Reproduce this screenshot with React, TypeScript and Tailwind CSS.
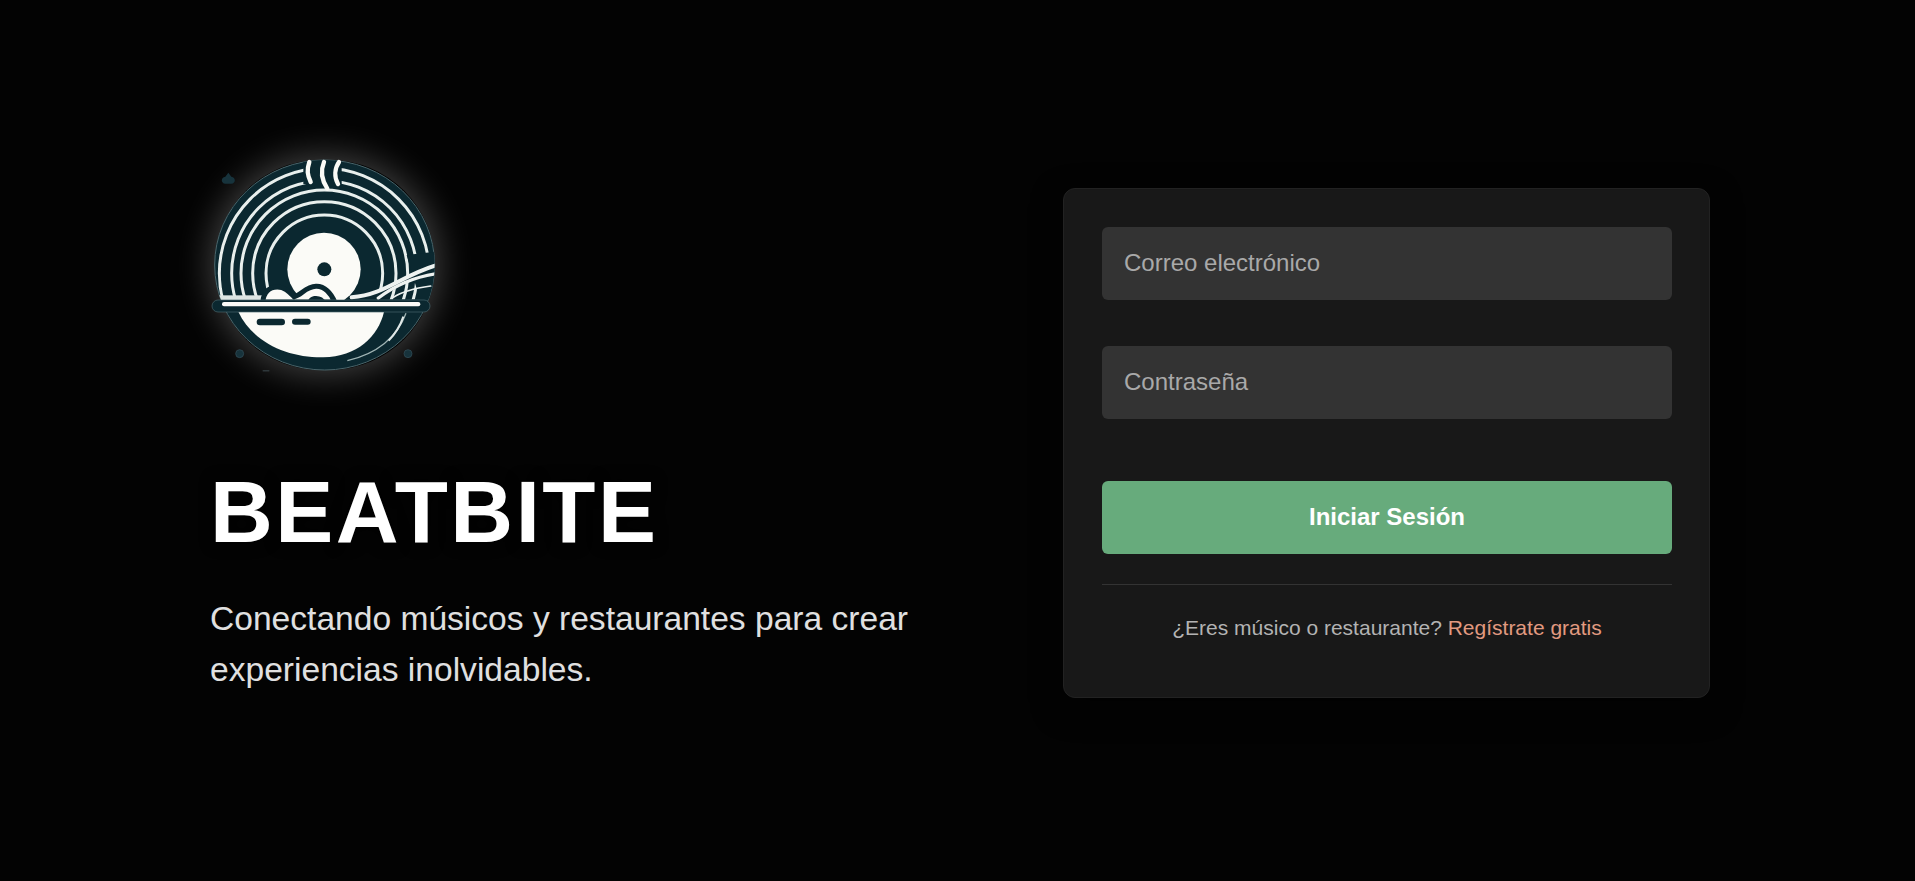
const rings = [175, 215, 250, 278, 315]
const ink = "#0b2830"
const paper = "#fbfbf7"

function Logo() {
  return (
    <svg viewBox="0 0 810 750" className="w-[270px] h-[250px] block">
      <defs>
        <clipPath id="discClip">
          <ellipse cx="404" cy="375" rx="330" ry="315" />
        </clipPath>
        <clipPath id="aboveBowl">
          <rect x="0" y="0" width="810" height="478" />
        </clipPath>
      </defs>
      <ellipse cx="404" cy="375" rx="330" ry="315" fill={ink} stroke="#4a666c" strokeWidth="3" />
      <g clipPath="url(#discClip)">
        <g clipPath="url(#aboveBowl)" fill="none" stroke="#e8efed" strokeWidth="9">
          {rings.map((r) => (
            <circle key={r} cx="403" cy="400" r={r} />
          ))}
        </g>
        <rect x="340" y="60" width="115" height="72" fill={ink} />
        <path d="M650 345 L740 335 L740 480 L690 480 Z" fill={ink} />
        <circle cx="402" cy="388" r="110" fill={paper} />
        <circle cx="403" cy="388" r="21" fill={ink} />
        <rect x="80" y="466" width="150" height="14" fill="#dde5e3" />
        <path d="M470 480 C580 472 630 402 740 368 L740 394 C660 417 610 447 565 480 Z" fill={ink} />
        <g fill="none" stroke="#eef2f0" strokeLinecap="round">
          <path d="M485 472 C585 465 635 405 745 374" strokeWidth="12" />
          <path d="M565 474 C610 440 670 410 745 400" strokeWidth="10" />
          <path d="M610 472 C640 452 680 444 722 438" strokeWidth="5" />
        </g>
        <path d="M218 486 C222 452 242 441 262 441 C286 441 298 456 312 470 C334 466 346 440 378 439 C404 438 424 460 434 486 Z" fill={paper} stroke={ink} strokeWidth="15" />
        <path d="M352 486 C358 472 366 468 378 468 C392 468 402 474 408 486 Z" fill={ink} />
        <path d="M145 515 H582 C565 590 500 650 400 652 C300 654 190 612 145 515 Z" fill={paper} />
        <path d="M648 520 C622 592 560 642 472 662" fill="none" stroke="#9fb3b3" strokeWidth="4" />
        <path d="M640 530 C630 560 615 582 596 602" fill="none" stroke="#dfe7e6" strokeWidth="6" />
      </g>
      <rect x="66" y="480" width="654" height="36" rx="18" fill={ink} stroke="#4a666c" strokeWidth="2" />
      <rect x="96" y="486" width="595" height="13" rx="6" fill={paper} />
      <rect x="200" y="536" width="85" height="20" rx="10" fill={ink} />
      <rect x="306" y="536" width="56" height="18" rx="9" fill={ink} />
      <g fill="none" stroke={paper} strokeWidth="13" strokeLinecap="round">
        <path d="M358 66 C350 90 352 105 362 126" />
        <path d="M402 66 C390 95 395 120 412 146" />
        <path d="M447 66 C434 85 432 110 444 132" />
      </g>
      <circle cx="149" cy="641" r="12" fill="#17333c" stroke="#35505a" strokeWidth="2" />
      <circle cx="654" cy="641" r="12" fill="#17333c" stroke="#35505a" strokeWidth="2" />
      <path d="M115 98 L124 110 C138 112 138 130 124 131 H106 C92 130 92 112 106 110 Z" fill="#17333c" />
      <rect x="218" y="691" width="20" height="3" fill="#3c4a4e" />
    </svg>
  )
}

export default function App() {
  return (
    <div className="min-h-screen bg-[#030303] flex justify-center items-center font-['Liberation_Sans',Arial,sans-serif]">
      <div className="w-[1505px] flex items-center justify-between">
        <div className="w-[720px] pl-[5px] mb-[26px]">
          <div className="relative h-[220px] mb-[84px]">
            {/* glow sits behind the logo disc */}
            <div className="absolute left-[5px] top-0 w-[220px] h-[210px] rounded-full shadow-[0_0_36px_4px_rgba(255,255,255,0.26)]"></div>
            <div className="absolute -left-[20px] -top-[20px]">
              <Logo />
            </div>
          </div>
          <h1 className="text-[87px] leading-[96px] font-bold tracking-[2.5px] text-white mb-[33px] [text-shadow:0_0_15px_#000]">BEATBITE</h1>
          <p className="text-[33.6px] leading-[51px] text-[#e0e0e0]">
            Conectando músicos y restaurantes para crear experiencias inolvidables.
          </p>
        </div>
        <div className="w-[647px] mt-[4px] bg-[#181818] border border-[#222222] rounded-xl pl-[38px] pr-[37px] pt-[38px] pb-[57px] shadow-[0_10px_30px_rgba(0,0,0,0.5)]">
          <input placeholder="Correo electrónico" className="block w-full h-[73px] rounded-md bg-[#333333] px-[22px] text-[24px] text-white placeholder:text-[#a9a9a9] outline-none mb-[46px]" />
          <input placeholder="Contraseña" className="block w-full h-[73px] rounded-md bg-[#333333] px-[22px] text-[24px] text-white placeholder:text-[#a9a9a9] outline-none mb-[62px]" />
          <button className="block w-full h-[73px] rounded-md bg-[#67ab7c] text-white font-bold text-[24px]">Iniciar Sesión</button>
          <div className="mt-[30px] border-t border-[#333333] pt-[30px] text-center text-[21px] leading-[25px] text-[#b3b3b3]">
            ¿Eres músico o restaurante? <a className="text-[#e29a80]">Regístrate gratis</a>
          </div>
        </div>
      </div>
    </div>
  )
}
